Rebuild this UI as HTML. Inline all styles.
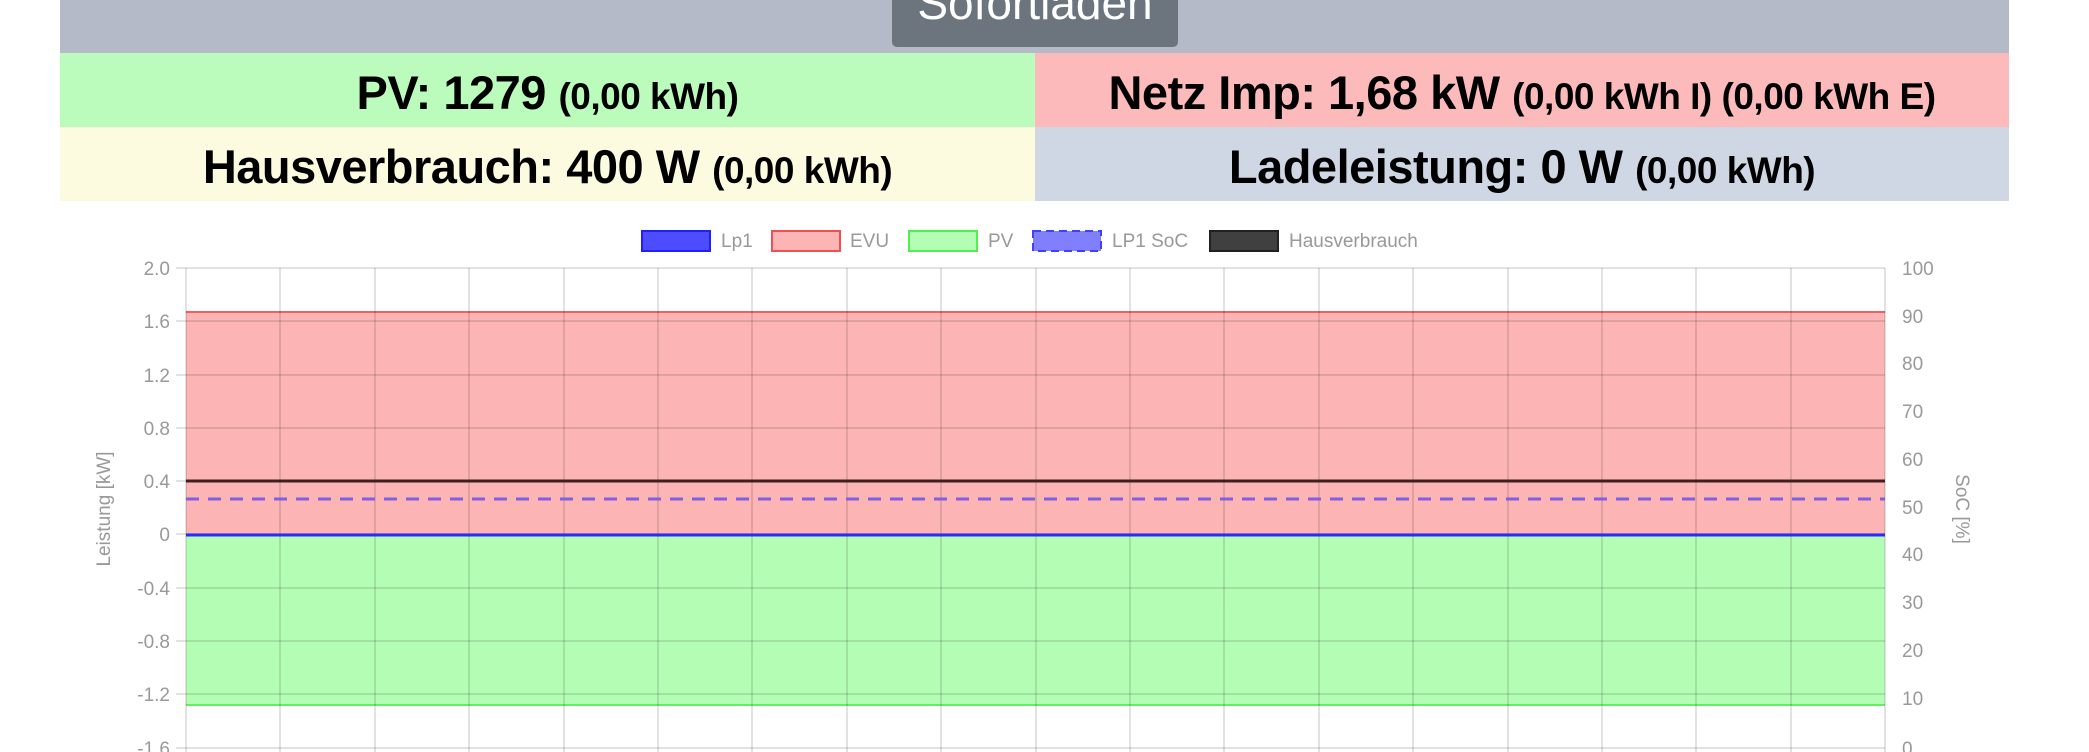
<!DOCTYPE html>
<html><head><meta charset="utf-8"><style>
html,body{margin:0;padding:0;width:2089px;height:752px;overflow:hidden;background:#fff;font-family:"Liberation Sans",sans-serif}
.hdr{position:absolute;left:60px;top:0;width:1949px;height:53px;background:#b4bac8}
.btn{position:absolute;left:892px;top:-6px;width:286px;height:53px;background:#6c747d;border-radius:5px}
.btxt{position:absolute;left:892px;top:-20px;width:286px;text-align:center;color:#fff;font-size:46px;line-height:46px}
.cell{position:absolute;height:74px;line-height:80px;text-align:center;font-weight:bold;font-size:47px;color:#000;white-space:nowrap;letter-spacing:-0.5px}
.cell small{font-size:37px}
</style></head><body>
<div class="hdr"></div>
<div class="btn"></div>
<div class="btxt">Sofortladen</div>
<div class="cell" style="left:60px;top:53px;width:975px;background:#bbfbbb">PV: 1279 <small>(0,00 kWh)</small></div>
<div class="cell" style="left:1035px;top:53px;width:974px;background:#fdbaba">Netz Imp: 1,68 kW <small>(0,00 kWh I) (0,00 kWh E)</small></div>
<div class="cell" style="left:60px;top:127px;width:975px;height:74px;background:#fdfbdf">Hausverbrauch: 400 W <small>(0,00 kWh)</small></div>
<div class="cell" style="left:1035px;top:127px;width:974px;height:74px;background:#d0d7e4">Ladeleistung: 0 W <small>(0,00 kWh)</small></div>
<svg width="2089" height="752" style="position:absolute;left:0;top:0" font-family="Liberation Sans, sans-serif">
<g font-size="19" fill="#999">
<rect x="642" y="231" width="68" height="20" fill="#4d4dff" stroke="#2020ff" stroke-width="2"/><text x="721" y="247">Lp1</text>
<rect x="772" y="231" width="68" height="20" fill="#fdb4b4" stroke="#f05050" stroke-width="2"/><text x="850" y="247">EVU</text>
<rect x="909" y="231" width="68" height="20" fill="#b4fdb4" stroke="#50f050" stroke-width="2"/><text x="988" y="247">PV</text>
<rect x="1033" y="231" width="68" height="20" fill="#8080ff" stroke="#4040ff" stroke-width="2" stroke-dasharray="8,5"/><text x="1112" y="247">LP1 SoC</text>
<rect x="1210" y="231" width="68" height="20" fill="#404040" stroke="#202020" stroke-width="2"/><text x="1289" y="247">Hausverbrauch</text>
</g>
<rect x="186" y="312" width="1699" height="222" fill="#fdb4b4"/>
<line x1="186" y1="312" x2="1885" y2="312" stroke="#f06060" stroke-width="2"/>
<rect x="186" y="534" width="1699" height="171" fill="#b4fdb4"/>
<line x1="186" y1="705" x2="1885" y2="705" stroke="#60f060" stroke-width="2"/>
<g stroke="rgba(0,0,0,0.15)" stroke-width="1.5">
<line x1="176" y1="268" x2="1885" y2="268"/><line x1="176" y1="321" x2="1885" y2="321"/><line x1="176" y1="375" x2="1885" y2="375"/><line x1="176" y1="428" x2="1885" y2="428"/><line x1="176" y1="481" x2="1885" y2="481"/><line x1="176" y1="534" x2="1885" y2="534"/><line x1="176" y1="588" x2="1885" y2="588"/><line x1="176" y1="641" x2="1885" y2="641"/><line x1="176" y1="694" x2="1885" y2="694"/><line x1="176" y1="748" x2="1885" y2="748"/>
<line x1="186" y1="268" x2="186" y2="752"/><line x1="280" y1="268" x2="280" y2="752"/><line x1="375" y1="268" x2="375" y2="752"/><line x1="469" y1="268" x2="469" y2="752"/><line x1="564" y1="268" x2="564" y2="752"/><line x1="658" y1="268" x2="658" y2="752"/><line x1="752" y1="268" x2="752" y2="752"/><line x1="847" y1="268" x2="847" y2="752"/><line x1="941" y1="268" x2="941" y2="752"/><line x1="1036" y1="268" x2="1036" y2="752"/><line x1="1130" y1="268" x2="1130" y2="752"/><line x1="1224" y1="268" x2="1224" y2="752"/><line x1="1319" y1="268" x2="1319" y2="752"/><line x1="1413" y1="268" x2="1413" y2="752"/><line x1="1508" y1="268" x2="1508" y2="752"/><line x1="1602" y1="268" x2="1602" y2="752"/><line x1="1696" y1="268" x2="1696" y2="752"/><line x1="1791" y1="268" x2="1791" y2="752"/><line x1="1885" y1="268" x2="1885" y2="752"/>
</g>
<line x1="186" y1="481" x2="1885" y2="481" stroke="#3a2020" stroke-width="3"/>
<line x1="186" y1="499" x2="1885" y2="499" stroke="#8060e0" stroke-width="3" stroke-dasharray="13,9"/>
<line x1="186" y1="535" x2="1885" y2="535" stroke="#2a2aff" stroke-width="3"/>
<g font-size="19" fill="#999" text-anchor="end">
<text x="170" y="275">2.0</text><text x="170" y="328">1.6</text><text x="170" y="382">1.2</text><text x="170" y="435">0.8</text><text x="170" y="488">0.4</text><text x="170" y="541">0</text><text x="170" y="595">-0.4</text><text x="170" y="648">-0.8</text><text x="170" y="701">-1.2</text><text x="170" y="755">-1.6</text>
</g>
<g font-size="19" fill="#999">
<text x="1902" y="275">100</text><text x="1902" y="323">90</text><text x="1902" y="370">80</text><text x="1902" y="418">70</text><text x="1902" y="466">60</text><text x="1902" y="514">50</text><text x="1902" y="561">40</text><text x="1902" y="609">30</text><text x="1902" y="657">20</text><text x="1902" y="705">10</text><text x="1902" y="755">0</text>
</g>
<text transform="translate(110,509) rotate(-90)" font-size="19" fill="#999" text-anchor="middle">Leistung [kW]</text>
<text transform="translate(1956,509) rotate(90)" font-size="19" fill="#999" text-anchor="middle">SoC [%]</text>
</svg>
</body></html>
